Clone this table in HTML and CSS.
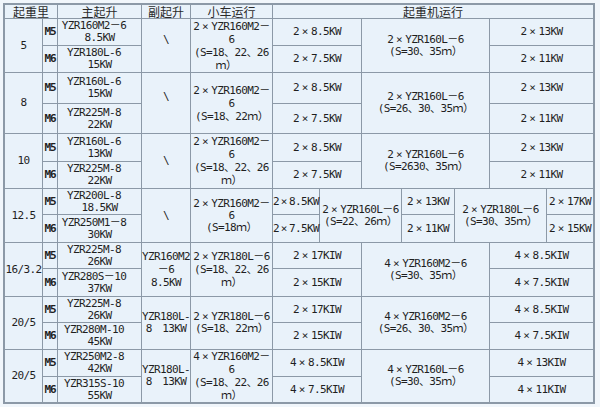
FILE: index.html
```html
<!DOCTYPE html>
<html lang="zh-CN">
<head>
<meta charset="utf-8">
<title>起重机配置表</title>
<link rel="stylesheet" href="styles.css">
</head>
<body>
<div class="tbl">
  <div class="h c2"><span>起重里</span></div>
  <div class="h"><span>主起升</span></div>
  <div class="h"><span>副起升</span></div>
  <div class="h"><span>小车运行</span></div>
  <div class="h c7"><span>起重机运行</span></div>

  <div class="r2"><span>5</span></div>
  <div class="m"><span>M5</span></div>
  <div><span>YZR160M2－6<b class="sp"></b><br>8.5KW</span></div>
  <div class="r2"><span>\<br>&#160;</span></div>
  <div class="r2 t"><span>2<i>×</i>YZR160M2－<br>6<br>(S=18、22、26<br>ｍ）<b class="sp"></b></span></div>
  <div class="c2"><span>2<i>×</i>8.5KW</span></div>
  <div class="c3 r2"><span>2<i>×</i>YZR160L－6<br>(S=30、35ｍ）</span></div>
  <div class="c2"><span>2<i>×</i>13KW</span></div>
  <div class="m"><span>M6</span></div>
  <div><span>YZR180L-6<b class="sp"></b><br>15KW</span></div>
  <div class="c2"><span>2<i>×</i>7.5KW</span></div>
  <div class="c2"><span>2<i>×</i>11KW</span></div>

  <div class="r2"><span>8</span></div>
  <div class="m"><span>M5</span></div>
  <div><span>YZR160L-6<b class="sp"></b><br>15KW</span></div>
  <div class="r2"><span>\<br>&#160;</span></div>
  <div class="r2 t"><span>2<i>×</i>YZR160M2－<br>6<br>(S=18、22ｍ）</span></div>
  <div class="c2"><span>2<i>×</i>8.5KW</span></div>
  <div class="c3 r2"><span>2<i>×</i>YZR160L－6<br>(S=26、30、35ｍ）</span></div>
  <div class="c2"><span>2<i>×</i>13KW</span></div>
  <div class="m"><span>M6</span></div>
  <div><span>YZR225M-8<b class="sp"></b><br>22KW</span></div>
  <div class="c2"><span>2<i>×</i>7.5KW</span></div>
  <div class="c2"><span>2<i>×</i>11KW</span></div>

  <div class="r2"><span>10</span></div>
  <div class="m"><span>M5</span></div>
  <div><span>YZR160L-6<b class="sp"></b><br>13KW</span></div>
  <div class="r2"><span>\</span></div>
  <div class="r2 t"><span>2<i>×</i>YZR160M2－<br>6<br>(S=18、22、26<br>ｍ）</span></div>
  <div class="c2"><span>2<i>×</i>8.5KW</span></div>
  <div class="c3 r2"><span>2<i>×</i>YZR160L－6<br>(S=2630、35ｍ）</span></div>
  <div class="c2"><span>2<i>×</i>13KW</span></div>
  <div class="m"><span>M6</span></div>
  <div><span>YZR225M-8<b class="sp"></b><br>22KW</span></div>
  <div class="c2"><span>2<i>×</i>7.5KW</span></div>
  <div class="c2"><span>2<i>×</i>11KW</span></div>

  <div class="r2"><span>12.5</span></div>
  <div class="m"><span>M5</span></div>
  <div><span>YZR200L-8<b class="sp"></b><br>18.5KW</span></div>
  <div class="r2"><span>\</span></div>
  <div class="r2"><span>2<i>×</i>YZR160M2－<br>6<br>(S=18ｍ）</span></div>
  <div class="nx"><span>2<i>×</i>8.5KW</span></div>
  <div class="c2 r2"><span>2<i>×</i>YZR160L－6<br>(S=22、26ｍ）</span></div>
  <div><span>2<i>×</i>13KW</span></div>
  <div class="c2 r2"><span>2<i>×</i>YZR180L－6<br>(S=30、35ｍ）</span></div>
  <div><span>2<i>×</i>17KW</span></div>
  <div class="m"><span>M6</span></div>
  <div><span>YZR250M1－8<b class="sp"></b><br>30KW</span></div>
  <div class="nx"><span>2<i>×</i>7.5KW</span></div>
  <div><span>2<i>×</i>11KW</span></div>
  <div><span>2<i>×</i>15KW</span></div>

  <div class="r2"><span>16/3.2</span></div>
  <div class="m"><span>M5</span></div>
  <div><span>YZR225M-8<b class="sp"></b><br>26KW</span></div>
  <div class="r2 t"><span>YZR160M2<br>－6<br>8.5KW</span></div>
  <div class="r2 t"><span>2<i>×</i>YZR180L－6<br>(S=18、22、26<br>ｍ）</span></div>
  <div class="c2"><span>2<i>×</i>17KIW</span></div>
  <div class="c3 r2"><span>4<i>×</i>YZR160M2－6<br>(S=30、35ｍ）</span></div>
  <div class="c2"><span>4<i>×</i>8.5KIW</span></div>
  <div class="m"><span>M6</span></div>
  <div><span>YZR280S－10<b class="sp"></b><br>37KW</span></div>
  <div class="c2"><span>2<i>×</i>15KIW</span></div>
  <div class="c2"><span>4<i>×</i>7.5KIW</span></div>

  <div class="r2"><span>20/5</span></div>
  <div class="m"><span>M5</span></div>
  <div><span>YZR225M-8<b class="sp"></b><br>26KW</span></div>
  <div class="r2"><span>YZR180L-<br>8　13KW</span></div>
  <div class="r2"><span>2<i>×</i>YZR180L－6<br>(S=18、22ｍ）</span></div>
  <div class="c2"><span>2<i>×</i>17KIW</span></div>
  <div class="c3 r2"><span>4<i>×</i>YZR160M2－6<br>(S=26、30、35ｍ）</span></div>
  <div class="c2"><span>4<i>×</i>8.5KIW</span></div>
  <div class="m"><span>M6</span></div>
  <div><span>YZR280M-10<b class="sp"></b><br>45KW</span></div>
  <div class="c2"><span>2<i>×</i>15KIW</span></div>
  <div class="c2"><span>4<i>×</i>7.5KIW</span></div>

  <div class="r2"><span>20/5</span></div>
  <div class="m"><span>M5</span></div>
  <div><span>YZR250M2-8<b class="sp"></b><br>42KW</span></div>
  <div class="r2"><span>YZR180L-<br>8　13KW</span></div>
  <div class="r2 t"><span>4<i>×</i>YZR160M2－<br>6<br>(S=18、22、26<br>ｍ）</span></div>
  <div class="c2"><span>4<i>×</i>8.5KIW</span></div>
  <div class="c3 r2"><span>4<i>×</i>YZR160L－6<br>(S=30、35ｍ）</span></div>
  <div class="c2"><span>4<i>×</i>13KIW</span></div>
  <div class="m"><span>M6</span></div>
  <div><span>YZR315S-10<b class="sp"></b><br>55KW</span></div>
  <div class="c2"><span>4<i>×</i>7.5KIW</span></div>
  <div class="c2"><span>4<i>×</i>11KIW</span></div>
</div>
</body>
</html>
```

FILE: styles.css
```css
html, body {
  margin: 0;
  padding: 0;
  background: #f1f6fb;
}
body {
  width: 600px;
  height: 407px;
  overflow: hidden;
}
.tbl {
  margin: 3px 0 0 3px;
  width: 588px;
  display: grid;
  grid-template-columns: 37px 14px 83px 48px 81px 46px 41px 39px 52px 34px 56px 46px;
  grid-template-rows: 13px 26px 26px 30px 29px 27px 26px 25px 27px 25px 27px 25px 26px 26px 25px;
  gap: 1px;
  background: #8c99a7;
  border: 2px solid #8c99a7;
  font-family: "DejaVu Sans Mono", "Noto Sans CJK SC", monospace;
  font-size: 11px;
  letter-spacing: -0.62px;
  line-height: 12px;
  color: #1f1f1f;
}
.tbl > div {
  background: #e9f2fa;
  display: flex;
  align-items: center;
  justify-content: center;
  text-align: center;
  white-space: nowrap;
}
.tbl i {
  font-style: normal;
  display: inline-block;
  width: 12px;
  text-align: center;
  letter-spacing: 0;
}
.tbl .nx i {
  width: 10px;
}
.tbl .sp {
  display: inline-block;
  width: 11px;
}
.tbl > .h {
  font-family: "Noto Sans CJK SC", sans-serif;
  font-size: 12px;
  letter-spacing: 0;
  line-height: 13px;
  color: #2a2a2a;
}
.tbl > .m {
  font-weight: bold;
  letter-spacing: -1px;
}
.tbl > .t {
  line-height: 13px;
}
.r2 { grid-row: span 2; }
.c2 { grid-column: span 2; }
.c3 { grid-column: span 3; }
.c7 { grid-column: span 7; }
```
